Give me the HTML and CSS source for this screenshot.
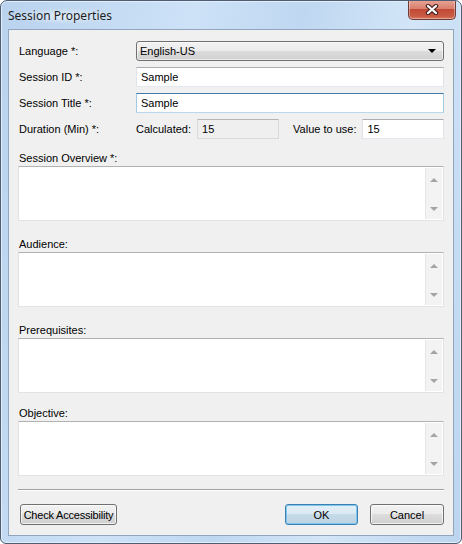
FILE: index.html
```html
<!DOCTYPE html>
<html lang="en">
<head>
<meta charset="UTF-8">
<title>Session Properties</title>
<link rel="stylesheet" href="styles.css">
</head>
<body>
<div class="window">
    <div class="titlebar">
        <span class="title">Session Properties</span>
        <button class="close" title="Close">
            <svg width="14" height="11" viewBox="0 0 14 11">
                <path d="M3 2 L11 9 M11 2 L3 9" stroke="#4b2a26" stroke-width="4.4" stroke-linecap="round"/>
                <path d="M3 2 L11 9 M11 2 L3 9" stroke="#ffffff" stroke-width="2.2" stroke-linecap="round"/>
            </svg>
        </button>
    </div>
    <div class="content">
        <div class="form-grid">
            <label>Language *:</label>
            <div class="select">
                <span>English-US</span>
                <span class="arrow"></span>
            </div>
            <label>Session ID *:</label>
            <input class="textbox" type="text" value="Sample">
            <label>Session Title *:</label>
            <input class="textbox focused" type="text" value="Sample">
            <label>Duration (Min) *:</label>
            <div class="duration">
                <span>Calculated:</span>
                <input class="textbox calc" type="text" value="15" disabled>
                <span class="value-label">Value to use:</span>
                <input class="textbox" type="text" value="15">
            </div>
        </div>

        <div class="memo-field first">
            <label>Session Overview *:</label>
            <div class="memo">
                <textarea></textarea>
                <div class="scrollbar"><span class="up"></span><span class="down"></span></div>
            </div>
        </div>
        <div class="memo-field">
            <label>Audience:</label>
            <div class="memo">
                <textarea></textarea>
                <div class="scrollbar"><span class="up"></span><span class="down"></span></div>
            </div>
        </div>
        <div class="memo-field">
            <label>Prerequisites:</label>
            <div class="memo">
                <textarea></textarea>
                <div class="scrollbar"><span class="up"></span><span class="down"></span></div>
            </div>
        </div>
        <div class="memo-field last">
            <label>Objective:</label>
            <div class="memo">
                <textarea></textarea>
                <div class="scrollbar"><span class="up"></span><span class="down"></span></div>
            </div>
        </div>

        <div class="separator"></div>

        <div class="button-row">
            <button class="btn check">Check Accessibility</button>
            <div class="spacer"></div>
            <button class="btn default ok">OK</button>
            <button class="btn cancel">Cancel</button>
        </div>
    </div>
</div>
</body>
</html>
```

FILE: styles.css
```css
body {
    margin: 0;
    background-color: white;
    font-family: "Liberation Sans", Arial, sans-serif;
    font-size: 11px;
    color: black;
}
.window {
    box-sizing: border-box;
    width: 462px;
    height: 544px;
    border: 1px solid #4d5d73;
    border-radius: 7px 7px 6px 6px;
    background: linear-gradient(100deg, #b9d2ee 0%, #cde2f7 35%, #bfd7f1 55%, #d3e6f8 75%, #bcd4ef 100%);
    box-shadow: inset 0 0 0 1px #e4eef9;
    display: flex;
    flex-direction: column;
    overflow: hidden;
}
.titlebar {
    height: 28px;
    display: flex;
    align-items: flex-start;
    position: relative;
}
.title {
    margin: 7px 0 0 7px;
    font-family: "Noto Sans", "Open Sans", sans-serif;
    font-size: 12px;
    line-height: 16px;
    color: #1e1e1e;
    padding: 0 6px 0 0;
    background: radial-gradient(ellipse at center, rgba(255,255,255,0.55) 0%, rgba(255,255,255,0) 70%);
}
.close {
    position: absolute;
    top: -1px;
    right: 5px;
    width: 48px;
    height: 20px;
    padding: 0;
    border: 1px solid #6f3b36;
    border-top: none;
    border-radius: 0 0 5px 5px;
    background: linear-gradient(#e8a597 0%, #d8806e 45%, #c24a36 50%, #c95a43 85%, #d77a5e 100%);
    box-shadow: inset 0 0 0 1px rgba(255,255,255,0.35);
    display: flex;
    align-items: center;
    justify-content: center;
}
.content {
    flex: 1;
    margin: 0 7px 7px 7px;
    border: 1px solid #91a5bd;
    background-color: #f0f0f0;
    padding: 11px 9px 0 9px;
    display: flex;
    flex-direction: column;
}
.form-grid {
    display: grid;
    grid-template-columns: 118px 1fr;
    grid-auto-rows: 20px;
    row-gap: 6px;
    align-items: center;
}
label {
    display: block;
    line-height: 14px;
    padding-left: 1px;
}
.form-grid label {
    margin-top: -1px;
}
.textbox {
    box-sizing: border-box;
    height: 20px;
    width: 100%;
    margin: 0;
    padding: 0 4px;
    font-family: inherit;
    font-size: 11px;
    color: black;
    background-color: white;
    border: 1px solid #e2e3ea;
    border-top-color: #abadb3;
    border-bottom-color: #e3e9ef;
    outline: none;
}
.textbox.focused {
    border-color: #a4c9e3;
    border-top-color: #3d7bad;
    border-bottom-color: #b7d9ed;
}
.textbox.calc {
    background-color: #efefef;
    border-color: #d9d9d9;
    border-top-color: #b5b5b5;
    color: black;
}
.select {
    box-sizing: border-box;
    height: 20px;
    border: 1px solid #707070;
    border-radius: 3px;
    background: linear-gradient(#f2f2f2 0%, #ebebeb 50%, #dddddd 50%, #cfcfcf 100%);
    box-shadow: inset 0 0 0 1px rgba(255,255,255,0.6);
    display: flex;
    align-items: center;
    justify-content: space-between;
    padding: 0 7px 0 3px;
}
.arrow {
    width: 0;
    height: 0;
    border-left: 4px solid transparent;
    border-right: 4px solid transparent;
    border-top: 4px solid black;
}
.duration {
    display: flex;
    align-items: center;
    height: 20px;
}
.duration .calc {
    width: 82px;
    margin-left: 6px;
}
.value-label {
    margin: 0 6px 0 14px;
    white-space: nowrap;
}
.duration .textbox:last-child {
    flex: 1;
}
.memo-field {
    margin-top: 16px;
}
.memo-field.first {
    margin-top: 12px;
}
.memo-field.last {
    margin-top: 13px;
}
.memo-field label {
    margin-bottom: 1px;
}
.memo {
    box-sizing: border-box;
    height: 55px;
    display: flex;
    background-color: white;
    border: 1px solid #e3e3e3;
    border-top-color: #b2b2b2;
}
.memo textarea {
    flex: 1;
    border: none;
    resize: none;
    outline: none;
    margin: 0;
    padding: 2px 4px;
    font-family: inherit;
    font-size: 11px;
}
.scrollbar {
    width: 16px;
    margin: 1px 1px 1px 0;
    background-color: #f3f3f3;
    border-left: 1px solid #e6e6e6;
    display: flex;
    flex-direction: column;
    justify-content: space-between;
    align-items: center;
    padding: 10px 0 8px;
}
.scrollbar .up {
    width: 0;
    height: 0;
    border-left: 4px solid transparent;
    border-right: 4px solid transparent;
    border-bottom: 4px solid #a4a4a4;
}
.scrollbar .down {
    width: 0;
    height: 0;
    border-left: 4px solid transparent;
    border-right: 4px solid transparent;
    border-top: 4px solid #a4a4a4;
}
.separator {
    margin-top: 13px;
    height: 1px;
    background-color: #a0a0a0;
    border-bottom: 1px solid white;
}
.button-row {
    display: flex;
    margin-top: 13px;
    padding-left: 2px;
}
.spacer {
    flex: 1;
}
.btn {
    box-sizing: border-box;
    height: 21px;
    padding: 0 2px;
    font-family: inherit;
    font-size: 11px;
    color: black;
    border: 1px solid #707070;
    border-radius: 3px;
    background: linear-gradient(#f2f2f2 0%, #ebebeb 50%, #dddddd 50%, #cfcfcf 100%);
    box-shadow: inset 0 0 0 1px rgba(255,255,255,0.7);
    white-space: nowrap;
}
.btn.default {
    border-color: #3c7fb1;
    background: linear-gradient(#e5f0f7 0%, #d8e8f2 50%, #c6dbe8 50%, #bdd3e2 100%);
    box-shadow: inset 0 0 0 1px #7fc6ef;
}
.check {
    width: 97px;
    letter-spacing: -0.2px;
}
.ok {
    width: 73px;
}
.cancel {
    width: 74px;
    margin-left: 12px;
}
```
